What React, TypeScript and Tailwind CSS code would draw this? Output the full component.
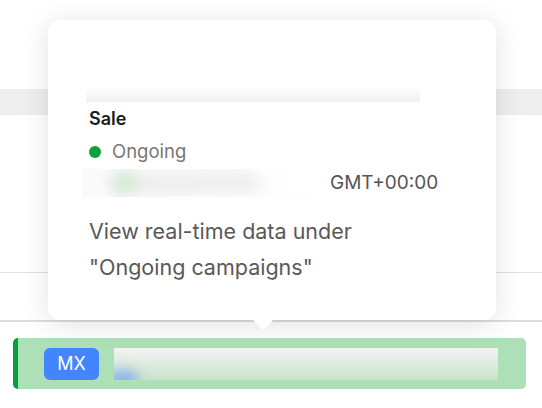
export default function App() {
  return (
    <div className="relative w-[542px] h-[408px] overflow-hidden bg-white font-['Inter',sans-serif]">
      {/* page behind the popover */}
      <div className="h-[89px]" />
      <div className="h-[26px] bg-[#efefef]" />
      <div className="h-[158px] border-b border-[#e2e2e2]" />
      <div className="h-[49px] border-b-2 border-[#dcdcdc]" />
      <div className="pt-[16px] pl-[13px]">
        <div className="flex items-center w-[513px] h-[51px] rounded-[5px] border-l-[5px] border-[#00a13c] bg-[#aee0b8]">
          <div className="ml-[26px] flex items-center justify-center w-[55px] h-[32px] rounded-[6px] bg-[#4285ff] text-white text-[18px]">
            MX
          </div>
          <div className="ml-[15px] relative w-[384px] h-[32px] overflow-hidden bg-gradient-to-b from-[#f3f3f3] to-[#c8e3cb]">
            <div className="absolute -left-[6px] bottom-[-10px] w-[30px] h-[20px] rounded-full bg-[#8fb4ee] blur-[6px]" />
          </div>
        </div>
      </div>

      {/* popover */}
      <div className="absolute left-[48px] top-[20px] w-[448px] h-[300px] rounded-[12px] bg-white shadow-[0_4px_28px_rgba(0,0,0,0.12)]">
        <div className="absolute left-[208px] bottom-[-7px] w-[14px] h-[14px] rotate-45 bg-white" />
        <div className="relative flex flex-col pl-[41px] pt-[50px]">
          <div className="ml-[-3px] w-[334px] h-[32px] bg-gradient-to-b from-white via-white to-[#f1f1f1]" />
          <div className="mt-[5px] text-[18px] leading-[24px] font-semibold text-[#1b1b1b]">Sale</div>
          <div className="mt-[9px] flex items-center h-[24px]">
            <span className="w-[12px] h-[12px] rounded-full bg-[#0ca13d]" />
            <span className="ml-[11px] text-[18.5px] text-[#777777]">Ongoing</span>
          </div>
          <div className="mt-[5px] ml-[-7px] flex items-center">
            <div className="relative w-[246px] h-[28px] overflow-hidden bg-gradient-to-r from-[#fafafa] to-white">
              <div className="absolute left-[28px] top-[5px] w-[150px] h-[18px] rounded-full bg-[#ebebeb] blur-[8px]" />
              <div className="absolute left-[30px] top-[4px] w-[26px] h-[20px] rounded-full bg-[#d6ecd6] blur-[6px]" />
            </div>
            <span className="ml-[2px] text-[19px] text-[#555555]">GMT+00:00</span>
          </div>
          <div className="mt-[15px] text-[21.5px] leading-[36px] text-[#595959]">
            View real-time data under
            <br />
            "Ongoing campaigns"
          </div>
        </div>
      </div>
    </div>
  );
}
